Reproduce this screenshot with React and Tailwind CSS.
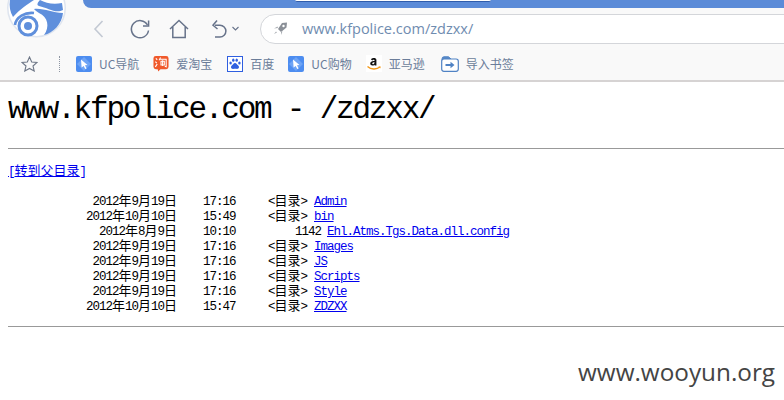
import React from 'react';

const MONO = "font-['Liberation_Mono','Noto_Sans_CJK_SC',monospace]";
const CJK = "font-['Noto_Sans_CJK_SC',sans-serif]";

const ROWS = [
  { date: '2012年9月19日', time: '17:16', name: 'Admin' },
  { date: '2012年10月10日', time: '15:49', name: 'bin' },
  { date: '2012年8月9日', time: '10:10', size: '1142', name: 'Ehl.Atms.Tgs.Data.dll.config' },
  { date: '2012年9月19日', time: '17:16', name: 'Images' },
  { date: '2012年9月19日', time: '17:16', name: 'JS' },
  { date: '2012年9月19日', time: '17:16', name: 'Scripts' },
  { date: '2012年9月19日', time: '17:16', name: 'Style' },
  { date: '2012年10月10日', time: '15:47', name: 'ZDZXX' },
];

// latin is narrower than the han glyphs, so han runs get their own size
const Mixed = ({ text }) =>
  text.split(/([\u4e00-\u9fa5]+)/).map((part, i) =>
    /[\u4e00-\u9fa5]/.test(part) ? (
      <span key={i} className={`${CJK} text-[13px] leading-[1px] tracking-normal`}>{part}</span>
    ) : (
      <span key={i}>{part}</span>
    ),
  );

const Logo = () => (
  <svg width="62" height="40" viewBox="0 0 62 40" className="absolute left-[6px] top-0">
    <circle cx="30.5" cy="8" r="29.5" fill="#dfe5ef" />
    <circle cx="30.5" cy="8" r="28" fill="#ffffff" />
    <path d="M4 0 L28 0 C22 4 14 9 7 17 C4 12 3 6 4 0Z" fill="#5f8fdc" />
    <path d="M34 0 C40 3 47 5 56 3 L57 10 C50 14 42 8 33 6 C30 5 32 2 34 0Z" fill="#5f8fdc" />
    <path d="M28 9 C38 8 46 13 57 13 C56 24 47 33 38 35 C44 27 42 17 33 13 C31 12 29 10 28 9Z" fill="#5f8fdc" />
    <circle cx="22" cy="26" r="9" fill="none" stroke="#5f8fdc" strokeWidth="3" />
    <path d="M9 25 C10 17 19 12 28 13" fill="none" stroke="#5f8fdc" strokeWidth="2.6" />
    <circle cx="22" cy="26" r="4" fill="#5f8fdc" />
  </svg>
);

const Cursor = () => (
  <svg width="16" height="16" viewBox="0 0 16 16">
    <rect width="16" height="16" rx="2" fill="#4d8df0" />
    <path d="M8 1 L15 8 L8 15 L1 8Z" fill="#6ea4f5" />
    <path d="M5 3.5 L11.5 9 L9 9.3 L10.6 12.4 L9.2 13 L7.7 9.9 L5.6 11.5Z" fill="#ffffff" />
  </svg>
);

const Taobao = () => (
  <svg width="16" height="18" viewBox="0 0 17 18">
    <path d="M3 0.5 H14 Q16.5 0.5 16.5 3 V12 Q16.5 14.5 14 14.5 H8 L5.5 17 L5 14.5 H3 Q0.5 14.5 0.5 12 V3 Q0.5 0.5 3 0.5Z" fill="#f0592a" />
    <path d="M3 3 L4.5 4.5 M2.5 6.5 L4 8 M2.5 12 L4.5 9" stroke="#fff" strokeWidth="1.2" fill="none" />
    <path d="M8 2 L6.5 5 M7.5 4 H14 V12 L12.5 11.5 M8.5 6 H12 V10 H8.5Z M10.2 5 V11" stroke="#fff" strokeWidth="1.1" fill="none" />
  </svg>
);

const Baidu = () => (
  <svg width="16" height="16" viewBox="0 0 16 16">
    <rect x="0.5" y="0.5" width="15" height="15" fill="#fff" stroke="#2f5fe0" />
    <g fill="#2f5fe0">
      <ellipse cx="3.6" cy="7" rx="1.2" ry="1.6" />
      <ellipse cx="6.3" cy="4.2" rx="1.2" ry="1.6" />
      <ellipse cx="9.7" cy="4.2" rx="1.2" ry="1.6" />
      <ellipse cx="12.4" cy="7" rx="1.2" ry="1.6" />
      <path d="M8 7 C6.5 7 6 8.6 4.8 9.6 C3.4 10.8 4 13 6 13 C7 13 9 12.6 10 13 C12 13 12.6 10.8 11.2 9.6 C10 8.6 9.5 7 8 7Z" />
    </g>
  </svg>
);

const Amazon = () => (
  <svg width="16" height="17" viewBox="0 0 16 17">
    <rect width="16" height="17" fill="#ffffff" />
    <path d="M5 4.5 C5.4 2.8 10.4 2.2 10.4 5 V10.5 H8.6 V9.7 C7 11.2 4.2 10.8 4.2 8.6 C4.2 6.6 6.6 6 8.6 6 C8.7 4.4 6.8 4.3 6.4 5.4Z M8.6 7.2 C7.4 7.2 6.1 7.5 6.2 8.6 C6.4 9.6 8.4 9.5 8.6 7.2Z" fill="#111111" fillRule="evenodd" />
    <path d="M1.5 11.5 C5 14.6 10.5 14.8 14 12" fill="none" stroke="#f49a1a" strokeWidth="1.4" />
    <path d="M12.4 11.4 L14.8 11.4 L14.2 13.6Z" fill="#f49a1a" />
  </svg>
);

const Import = () => (
  <svg width="18" height="16" viewBox="0 0 18 16">
    <path d="M1 5 V3 Q1 0.8 3 0.8 H7.5 L10 3" fill="#5a8bc8" stroke="#4f82c4" />
    <rect x="0.7" y="3" width="16.6" height="12.3" rx="2.2" fill="#ffffff" stroke="#4f82c4" strokeWidth="1.2" />
    <path d="M4.5 8 H9.5 V5.8 L13.5 9 L9.5 12.2 V10 H4.5Z" fill="#4f82c4" />
  </svg>
);

const BOOKMARKS = [
  { label: 'UC导航', icon: <Cursor />, gap: 'mr-[14px]' },
  { label: '爱淘宝', icon: <Taobao />, gap: 'mr-[15px]' },
  { label: '百度', icon: <Baidu />, gap: 'mr-[14px]' },
  { label: 'UC购物', icon: <Cursor />, gap: 'mr-[14px]' },
  { label: '亚马逊', icon: <Amazon />, gap: 'mr-[16px]' },
  { label: '导入书签', icon: <Import />, gap: '' },
];

const Toolbar = () => (
  <div className="flex items-center h-[37px] mt-[2px]">
    <svg width="12" height="20" viewBox="0 0 12 20" className="ml-[93px]">
      <path d="M9.5 2 L2 10 L9.5 18" fill="none" stroke="#c3c9d3" strokeWidth="1.6" />
    </svg>
    <svg width="22" height="22" viewBox="0 0 22 22" className="ml-[24px]">
      <path d="M18.5 7 A8.6 8.6 0 1 0 19.5 12.5" fill="none" stroke="#67738a" strokeWidth="1.5" />
      <path d="M19.6 2.5 V8 H14" fill="none" stroke="#67738a" strokeWidth="1.5" />
    </svg>
    <svg width="20" height="20" viewBox="0 0 20 20" className="ml-[18px]">
      <path d="M1 10 L10 1.5 L19 10 M3.8 8 V18.5 H16.2 V8" fill="none" stroke="#67738a" strokeWidth="1.5" />
    </svg>
    <svg width="16" height="20" viewBox="0 0 16 20" className="ml-[22px]">
      <path d="M4 6.2 H9 A5.8 5.8 0 0 1 9 18 H4" fill="none" stroke="#67738a" strokeWidth="1.5" />
      <path d="M6 1.5 L2 6.2 L6.5 10" fill="none" stroke="#67738a" strokeWidth="1.5" />
    </svg>
    <svg width="7" height="5" viewBox="0 0 7 5" className="ml-[5px]">
      <path d="M0.5 1 L3.5 4 L6.5 1" fill="none" stroke="#67738a" strokeWidth="1.1" />
    </svg>
    <div className="ml-[21px] flex-1 h-[30px] -mr-8 flex items-center rounded-full border border-[#d4d6da] bg-white">
      <svg width="15" height="14" viewBox="0 0 15 14" className="ml-[12px]">
        <path d="M9 1 L14 0.5 L13.5 5.5 L8 10 L5 7Z" fill="#8a8f97" />
        <circle cx="10.5" cy="4" r="1.2" fill="#fff" />
        <path d="M1 6.5 L4.5 4.5 L5 6Z M8 13 L9.5 9.5 L8 9.5Z M1 12 L3 9.5 L4 10.5Z" fill="#a9adb3" />
      </svg>
      <span className="ml-[14px] text-[14.5px] text-[#6f8cb0] font-['Open_Sans',sans-serif]">www.kfpolice.com/zdzxx/</span>
    </div>
  </div>
);

const Bookmarks = () => (
  <div className="flex items-center h-[33px] text-[12px] text-[#6b7d99]">
    <svg width="17" height="16" viewBox="0 0 17 16" className="ml-[21px]">
      <path d="M8.5 1 L10.7 6 L16 6.5 L12 10 L13.2 15 L8.5 12.4 L3.8 15 L5 10 L1 6.5 L6.3 6Z" fill="none" stroke="#6e7787" strokeWidth="1.1" />
    </svg>
    <div className="ml-[21px] h-[16px] border-l border-dotted border-[#8e96a3]" />
    <div className="ml-[16px] flex items-center">
      {BOOKMARKS.map((b) => (
        <div key={b.label} className={`flex items-center ${b.gap}`}>
          {b.icon}
          <span className={`ml-[7px] ${CJK}`}>{b.label}</span>
        </div>
      ))}
    </div>
  </div>
);

const Row = ({ date, time, size, name }) => (
  <div className="flex h-[15px] leading-[15px] whitespace-pre">
    <div className="w-[169px] text-right"><Mixed text={date} /></div>
    <div className="ml-[26px] w-[33px]">{time}</div>
    {size ? (
      <div className="w-[91px] pr-[6px] text-right">{size}</div>
    ) : (
      <div className="w-[78px] pl-[32px]"><Mixed text="<目录>" /></div>
    )}
    <a href="#" className="text-[#0000ee] underline">{name}</a>
  </div>
);

export default function App() {
  return (
    <div className="relative w-[784px] h-[400px] overflow-hidden bg-white text-black">
      <header className="relative h-[82px] bg-[#f9f9f9] border-b-2 border-[#d6d3d3]">
        <div className="ml-[83px] h-2 bg-[#5b8bd8] rounded-bl-xl">
          <div className="ml-[212px] w-[196px] h-[2px] bg-white border-b border-[#2f5cab] rounded-b" />
        </div>
        <Toolbar />
        <Bookmarks />
        <Logo />
      </header>

      <main className={`pl-2 ${MONO} text-[12.5px] tracking-[-1px]`}>
        <h1 className="mt-[11px] h-[34px] leading-[34px] text-[31px] tracking-[-2.2px] font-normal whitespace-pre">www.kfpolice.com - /zdzxx/</h1>
        <hr className="mt-[21px] border-t border-[#999999]" />
        <p className="mt-[16px] h-[15px] leading-[15px]">
          <a href="#" className="text-[#0000ee] underline">
            <Mixed text="[转到父目录]" />
          </a>
        </p>
        <div className="mt-[15px]">
          {ROWS.map((r) => (
            <Row key={r.name} {...r} />
          ))}
        </div>
        <hr className="mt-[11px] border-t border-[#999999]" />
      </main>

      <div className="absolute left-[578px] top-[355px] text-[24.3px] leading-[34px] text-[#444444] font-['Open_Sans',sans-serif]">www.wooyun.org</div>
    </div>
  );
}
